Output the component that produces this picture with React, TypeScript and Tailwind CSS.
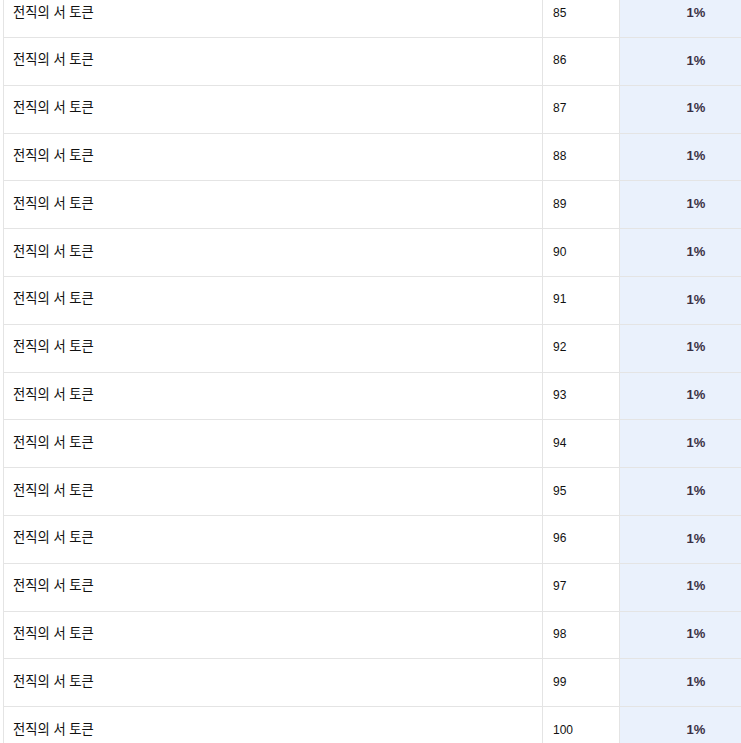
const ROWS = Array.from({ length: 16 }, (_, i) => 85 + i);

export default function App() {
  return (
    <div className="h-screen overflow-hidden bg-white font-['Liberation_Sans','Noto_Sans_CJK_KR',sans-serif]">
      <div className="ml-[3px] mt-[-9.8px] w-[769px] border-l border-[#e4e4e4]">
        {ROWS.map((level) => (
          <div
            key={level}
            className="grid h-[47.8px] grid-cols-[539px_77px_152px] border-b border-[#e4e4e4]"
          >
            <div className="flex items-center border-r border-[#e4e4e4] pb-[2px] pl-[9px] text-[13.3px] text-[#111]">
              전직의 서 토큰
            </div>
            <div className="flex items-center border-r border-[#e4e4e4] pb-[2px] pl-[10px] text-[12px] text-[#111]">
              {level}
            </div>
            <div className="flex items-center justify-center bg-[#eaf1fc] pb-[2px] text-[13px] font-bold text-[#3a3044]">
              1%
            </div>
          </div>
        ))}
      </div>
    </div>
  );
}
